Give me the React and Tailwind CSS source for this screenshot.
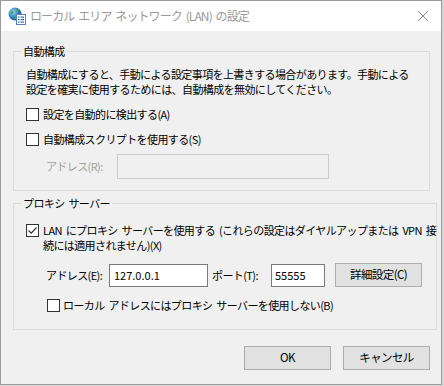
import React from 'react';

const font = { fontFamily: '"Noto Sans CJK JP", "Noto Sans", sans-serif' };

const Checkbox = ({ checked }) => (
  <span className="flex h-[13px] w-[13px] shrink-0 items-center justify-center border border-[#333333] bg-white">
    {checked && (
      <svg width="11" height="11" viewBox="0 0 11 11" fill="none">
        <path d="M1.5 5.5 L4.2 8.2 L9.5 2.5" stroke="#333333" strokeWidth="1.2" />
      </svg>
    )}
  </span>
);

const Button = ({ children, className = '' }) => (
  <button className={`flex h-[24px] w-[87px] items-center justify-center border border-[#adadad] bg-[#e1e1e1] text-[11.5px] text-black ${className}`}>
    {children}
  </button>
);

const WindowIcon = () => (
  <svg width="18" height="18" viewBox="0 0 18 18">
    <defs>
      <radialGradient id="globe" cx="0.35" cy="0.35" r="0.7">
        <stop offset="0" stopColor="#9fd8ff" />
        <stop offset="0.6" stopColor="#2d7fd0" />
        <stop offset="1" stopColor="#1a4f9c" />
      </radialGradient>
    </defs>
    <circle cx="7" cy="7" r="6.5" fill="url(#globe)" />
    <path d="M3 4 C5 3 6 5 5 7 C4 8 3 7 2.5 6 Z" fill="#4caf3a" />
    <path d="M8 2 C10 2 11 4 9.5 5 C8.5 5.5 8 4 8 2 Z" fill="#4caf3a" />
    <path d="M6 9 C8 8.5 9 10 8 12 C7 12.5 6 11 6 9 Z" fill="#4caf3a" />
    <rect x="8.5" y="7.5" width="9" height="10" fill="#ffffff" stroke="#5a7fb0" strokeWidth="1" />
    <rect x="10" y="9.5" width="1.5" height="1.2" fill="#2b6cc4" />
    <rect x="12.5" y="9.5" width="3.5" height="1.2" fill="#2b6cc4" />
    <rect x="10" y="12" width="1.5" height="1.2" fill="#2b6cc4" />
    <rect x="12.5" y="12" width="3.5" height="1.2" fill="#2b6cc4" />
    <rect x="10" y="14.5" width="1.5" height="1.2" fill="#2b6cc4" />
    <rect x="12.5" y="14.5" width="3.5" height="1.2" fill="#2b6cc4" />
  </svg>
);

const App = () => {
  return (
    <div className="flex h-[386px] w-[444px] bg-[#d8d8d8]" style={font}>
      <div className="flex h-[385px] w-[442px] flex-col border border-[#9a9a9a] bg-[#f0f0f0] text-[11px] tracking-[-0.6px] text-black [word-spacing:2px]">
        {/* Title bar */}
        <div className="flex h-[30px] shrink-0 items-center bg-white pl-[7px] pr-[12px]">
          <WindowIcon />
          <span className="ml-[4px] text-[12px] tracking-[-0.9px] text-[#9a9a9a]">ローカル エリア ネットワーク (LAN) の設定</span>
          <svg className="ml-auto" width="12" height="12" viewBox="0 0 12 12">
            <path d="M1 1 L11 11 M11 1 L1 11" stroke="#8a8a8a" strokeWidth="1" />
          </svg>
        </div>

        {/* Automatic configuration */}
        <fieldset className="ml-[12px] mt-[13px] h-[147px] w-[417px] border border-[#dcdcdc]">
          <legend className="ml-[7px] px-[2px] leading-[14px]">自動構成</legend>
          <div className="flex flex-col pl-[12px] pt-[9px]">
            <p className="whitespace-nowrap leading-[15px]">
              自動構成にすると、手動による設定事項を上書きする場合があります。手動による
              <br />
              設定を確実に使用するためには、自動構成を無効にしてください。
            </p>
            <label className="mt-[10px] flex items-center gap-[4px] leading-[15px]">
              <Checkbox />
              <span>設定を自動的に検出する(A)</span>
            </label>
            <label className="mt-[10px] flex items-center gap-[4px] leading-[15px]">
              <Checkbox />
              <span>自動構成スクリプトを使用する(S)</span>
            </label>
            <div className="mt-[7px] flex items-center">
              <span className="ml-[20px] w-[71px] text-[#a0a0a0]">アドレス(R):</span>
              <div className="h-[25px] w-[212px] border border-[#cccccc] bg-[#f0f0f0]" />
            </div>
          </div>
        </fieldset>

        {/* Proxy server */}
        <fieldset className="ml-[12px] mt-[5px] h-[134px] w-[417px] border border-[#dcdcdc]">
          <legend className="ml-[7px] px-[2px] leading-[14px]">プロキシ サーバー</legend>
          <div className="flex flex-col pl-[12px] pt-[13px]">
            <label className="flex items-start gap-[4px] leading-[15px]">
              <span className="mt-[1px]">
                <Checkbox checked />
              </span>
              <span className="whitespace-nowrap">
                LAN にプロキシ サーバーを使用する (これらの設定はダイヤルアップまたは VPN 接
                <br />
                続には適用されません)(X)
              </span>
            </label>
            <div className="mt-[10px] flex items-center">
              <span className="ml-[20px] w-[63px]">アドレス(E):</span>
              <div className="flex h-[23px] w-[99px] items-center border border-[#7a7a7a] bg-white px-[4px] tracking-normal">127.0.0.1</div>
              <span className="ml-[4px] w-[59px]">ポート(T):</span>
              <div className="flex h-[23px] w-[54px] items-center border border-[#7a7a7a] bg-white px-[3px] tracking-normal">55555</div>
              <Button className="ml-[10px]">詳細設定(C)</Button>
            </div>
            <label className="ml-[21px] mt-[11px] flex items-center gap-[3px] leading-[15px]">
              <Checkbox />
              <span>ローカル アドレスにはプロキシ サーバーを使用しない(B)</span>
            </label>
          </div>
        </fieldset>

        {/* Footer buttons */}
        <div className="mr-[11px] mt-[16px] flex justify-end gap-[12px]">
          <Button>OK</Button>
          <Button>キャンセル</Button>
        </div>
      </div>
    </div>
  );
};

export default App;
